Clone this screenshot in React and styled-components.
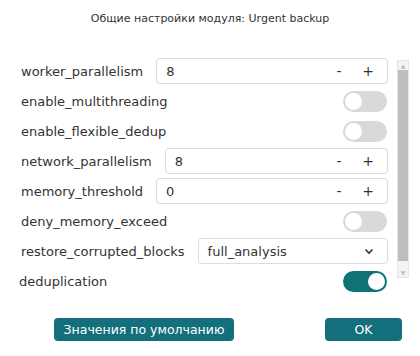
import styled, { createGlobalStyle } from "styled-components";

const GlobalStyle = createGlobalStyle`
  body {
    margin: 0;
    background: #ffffff;
    font-family: "DejaVu Sans", "Noto Sans", sans-serif;
    color: #333333;
  }
`;

const Dialog = styled.div`
  width: 420px;
  height: 356px;
  display: flex;
  flex-direction: column;
  background: #ffffff;
  box-sizing: border-box;
`;

const Title = styled.div`
  height: 36px;
  display: flex;
  align-items: center;
  justify-content: center;
  font-size: 11px;
  color: #333333;
`;

const Body = styled.div`
  display: flex;
  margin-top: 20px;
  padding-left: 21px;
`;

const FieldList = styled.div`
  width: 367px;
  display: flex;
  flex-direction: column;
`;

const Row = styled.div`
  height: 30px;
  display: flex;
  align-items: center;
  justify-content: space-between;
  gap: 13px;
  margin-left: ${(props) => props.shift || 0}px;
`;

const Label = styled.span`
  font-size: 13px;
  color: #333333;
  white-space: nowrap;
`;

const Field = styled.div`
  flex: 1;
  height: 26px;
  box-sizing: border-box;
  border: 1px solid #dcdcdc;
  border-radius: 4px;
  display: flex;
  align-items: center;
  padding: 0 8px 0 9px;
  font-size: 13px;
  color: #333333;
`;

const Value = styled.span`
  flex: 1;
`;

const StepButton = styled.span`
  width: 22px;
  text-align: center;
  font-size: 14px;
  color: #333333;
  & + & {
    margin-left: 7px;
  }
`;

const Chevron = styled.svg`
  width: 12px;
  height: 12px;
  margin-right: 4px;
`;

const Toggle = styled.div`
  width: 44px;
  height: 21px;
  border-radius: 11px;
  background: ${(props) => (props.on ? "#0f7277" : "#d9d9d9")};
  display: flex;
  align-items: center;
  justify-content: ${(props) => (props.on ? "flex-end" : "flex-start")};
  padding: 0 2px;
  box-sizing: border-box;
  margin-right: 1px;
  &::after {
    content: "";
    width: 17px;
    height: 17px;
    border-radius: 50%;
    background: #ffffff;
  }
`;

const Scrollbar = styled.div`
  margin-left: 9px;
  margin-top: 4px;
  width: 12px;
  height: 218px;
  box-sizing: border-box;
  border: 1px solid #e6e6e6;
  background: #f4f4f4;
  display: flex;
  flex-direction: column;
  align-items: center;
`;

const Arrow = styled.div`
  height: 9px;
  display: flex;
  align-items: center;
  justify-content: center;
  font-size: 6px;
  color: #bcbcbc;
`;

const Thumb = styled.div`
  width: 10px;
  height: 191px;
  background: #bdbdbd;
`;

const Track = styled.div`
  flex: 1;
`;

const Footer = styled.div`
  display: flex;
  justify-content: space-between;
  padding: 0 18px 0 54px;
  margin-top: 22px;
`;

const Button = styled.button`
  height: 23px;
  width: ${(props) => props.width}px;
  border: none;
  border-radius: 4px;
  background: #136f7b;
  color: #ffffff;
  font-family: "DejaVu Sans", "Noto Sans", sans-serif;
  font-size: 12.5px;
  padding: 0;
`;

function Stepper({ value }) {
  return (
    <Field>
      <Value>{value}</Value>
      <StepButton>-</StepButton>
      <StepButton>+</StepButton>
    </Field>
  );
}

function Select({ value }) {
  return (
    <Field>
      <Value>{value}</Value>
      <Chevron viewBox="0 0 12 12">
        <path d="M2.5 4.5 L6 8 L9.5 4.5" fill="none" stroke="#333" strokeWidth="1.6" />
      </Chevron>
    </Field>
  );
}

export default function App() {
  return (
    <>
      <GlobalStyle />
      <Dialog>
        <Title>Общие настройки модуля: Urgent backup</Title>
        <Body>
          <FieldList>
            <Row>
              <Label>worker_parallelism</Label>
              <Stepper value="8" />
            </Row>
            <Row>
              <Label>enable_multithreading</Label>
              <Toggle />
            </Row>
            <Row>
              <Label>enable_flexible_dedup</Label>
              <Toggle />
            </Row>
            <Row>
              <Label>network_parallelism</Label>
              <Stepper value="8" />
            </Row>
            <Row>
              <Label>memory_threshold</Label>
              <Stepper value="0" />
            </Row>
            <Row>
              <Label>deny_memory_exceed</Label>
              <Toggle />
            </Row>
            <Row>
              <Label>restore_corrupted_blocks</Label>
              <Select value="full_analysis" />
            </Row>
            <Row shift={-2}>
              <Label>deduplication</Label>
              <Toggle on />
            </Row>
          </FieldList>
          <Scrollbar>
            <Arrow>▲</Arrow>
            <Thumb />
            <Track />
            <Arrow>▼</Arrow>
          </Scrollbar>
        </Body>
        <Footer>
          <Button width={180}>Значения по умолчанию</Button>
          <Button width={77}>OK</Button>
        </Footer>
      </Dialog>
    </>
  );
}
